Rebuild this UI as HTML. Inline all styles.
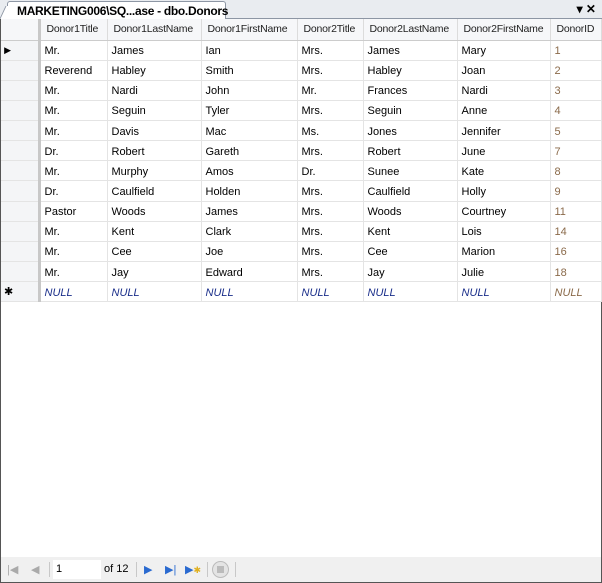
<!DOCTYPE html>
<html><head><style>
*{margin:0;padding:0;box-sizing:border-box}
body{width:602px;height:583px;background:#fff;font-family:"Liberation Sans",sans-serif;font-size:11px;position:relative;overflow:hidden}
.top{position:absolute;left:0;top:0;width:602px;height:19px;background:#e9ecf0;border-bottom:1px solid #8d96a4}
.tab{position:absolute;left:7px;top:1px;width:219px;height:19px;background:#fff;border:1px solid #8d96a4;border-bottom:none;font-weight:bold;font-size:12px;letter-spacing:-0.3px;white-space:nowrap;padding:2px 0 0 9px;border-radius:3px 3px 0 0}
.tab:before{content:"";position:absolute;left:-6px;top:4px;width:8px;height:15px;border-left:1px solid #8d96a4;transform:skewX(-25deg);background:#fff}
.ctl{position:absolute;right:6px;top:2px;font-size:12px;font-weight:bold}
.frame{position:absolute;left:0;top:19px;width:602px;height:564px;border:1px solid #555;border-top:none}
table{position:absolute;left:1px;top:19px;border-collapse:collapse;table-layout:fixed}
td,th{height:20.15px;padding:2px 0 0 4px;white-space:nowrap;overflow:hidden;text-align:left;font-weight:normal;border-right:1px solid #e4e4e4;border-bottom:1px solid #e4e4e4;color:#000}
th{height:21px;background:#f6f7f9;border-right:1px solid #dcdcdc;border-bottom:1px solid #ccc;padding:0 0 0 6px;color:#222;font-size:10.5px;letter-spacing:-0.2px}
td.rh{background:#f4f5f7;border-right:3px solid #c8c8c8;padding:0;text-align:left}
th.rh{border-right:3px solid #c8c8c8}
td.id{color:#8a6a4a}
td i{color:#1a2e8a}
td.id i{color:#8a6a4a}
.bar{position:absolute;left:1px;top:557px;width:600px;height:25px;background:#f0f0f0}
.bar span{position:absolute;top:6px;font-size:11px}
.sep{position:absolute;top:5px;width:1px;height:15px;background:#c8c8c8}
</style></head><body>
<div class="top"><div class="tab">MARKETING006\SQ...ase - dbo.Donors</div><div class="ctl">▾ ✕</div></div>
<div class="frame"></div>
<table>
<colgroup><col style="width:38px"><col style="width:68px"><col style="width:94px"><col style="width:96px"><col style="width:66px"><col style="width:94px"><col style="width:93px"><col style="width:51px"></colgroup>
<tr><th class="rh"></th><th>Donor1Title</th><th>Donor1LastName</th><th>Donor1FirstName</th><th>Donor2Title</th><th>Donor2LastName</th><th>Donor2FirstName</th><th>DonorID</th></tr>
<tr><td class="rh">&nbsp;<span style="font-size:9px">▶</span></td><td>Mr.</td><td>James</td><td>Ian</td><td>Mrs.</td><td>James</td><td>Mary</td><td class="id">1</td></tr>
<tr><td class="rh"></td><td>Reverend</td><td>Habley</td><td>Smith</td><td>Mrs.</td><td>Habley</td><td>Joan</td><td class="id">2</td></tr>
<tr><td class="rh"></td><td>Mr.</td><td>Nardi</td><td>John</td><td>Mr.</td><td>Frances</td><td>Nardi</td><td class="id">3</td></tr>
<tr><td class="rh"></td><td>Mr.</td><td>Seguin</td><td>Tyler</td><td>Mrs.</td><td>Seguin</td><td>Anne</td><td class="id">4</td></tr>
<tr><td class="rh"></td><td>Mr.</td><td>Davis</td><td>Mac</td><td>Ms.</td><td>Jones</td><td>Jennifer</td><td class="id">5</td></tr>
<tr><td class="rh"></td><td>Dr.</td><td>Robert</td><td>Gareth</td><td>Mrs.</td><td>Robert</td><td>June</td><td class="id">7</td></tr>
<tr><td class="rh"></td><td>Mr.</td><td>Murphy</td><td>Amos</td><td>Dr.</td><td>Sunee</td><td>Kate</td><td class="id">8</td></tr>
<tr><td class="rh"></td><td>Dr.</td><td>Caulfield</td><td>Holden</td><td>Mrs.</td><td>Caulfield</td><td>Holly</td><td class="id">9</td></tr>
<tr><td class="rh"></td><td>Pastor</td><td>Woods</td><td>James</td><td>Mrs.</td><td>Woods</td><td>Courtney</td><td class="id">11</td></tr>
<tr><td class="rh"></td><td>Mr.</td><td>Kent</td><td>Clark</td><td>Mrs.</td><td>Kent</td><td>Lois</td><td class="id">14</td></tr>
<tr><td class="rh"></td><td>Mr.</td><td>Cee</td><td>Joe</td><td>Mrs.</td><td>Cee</td><td>Marion</td><td class="id">16</td></tr>
<tr><td class="rh"></td><td>Mr.</td><td>Jay</td><td>Edward</td><td>Mrs.</td><td>Jay</td><td>Julie</td><td class="id">18</td></tr>
<tr><td class="rh">&nbsp;✱</td><td><i>NULL</i></td><td><i>NULL</i></td><td><i>NULL</i></td><td><i>NULL</i></td><td><i>NULL</i></td><td><i>NULL</i></td><td class="id"><i>NULL</i></td></tr>
</table>
<div class="bar">
<span style="left:6px;color:#aaa">|◀</span>
<span style="left:30px;color:#aaa">◀</span>
<div class="sep" style="left:48px"></div>
<div style="position:absolute;left:52px;top:3px;width:48px;height:19px;background:#fff"></div>
<span style="left:55px">1</span>
<span style="left:103px">of 12</span>
<div class="sep" style="left:135px"></div>
<span style="left:143px;color:#2a6ad0">▶</span>
<span style="left:164px;color:#2a6ad0">▶|</span>
<span style="left:184px;color:#2a6ad0">▶<span style="position:static;color:#e0b020;font-size:9px">✱</span></span>
<div class="sep" style="left:206px"></div>
<div style="position:absolute;left:211px;top:4px;width:17px;height:17px;border-radius:50%;border:1px solid #bbb;background:#e4e4e4"><div style="margin:4px;width:7px;height:7px;background:#bbb"></div></div>
<div class="sep" style="left:234px"></div>
</div>
</body></html>
